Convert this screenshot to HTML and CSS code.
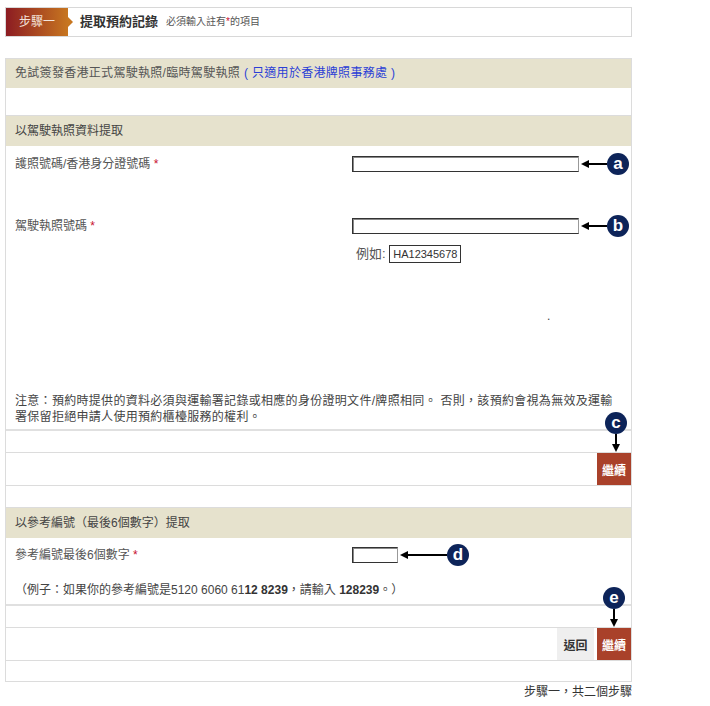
FILE: index.html
```
<!DOCTYPE html>
<html>
<head>
  <meta charset="utf-8">
  <link rel="stylesheet" href="styles.css">
</head>
<body>
<div class="head">
  <div class="step">步驟一</div>
  <h1>提取預約記錄</h1>
  <span class="req">必須輸入註有<span class="star">*</span>的項目</span>
</div>

<div class="panel">
  <div class="bar title">免試簽發香港正式駕駛執照/臨時駕駛執照<span class="blue">( 只適用於香港牌照事務處 )</span></div>
  <div class="gap"></div>

  <div class="section">
    <div class="bar">以駕駛執照資料提取</div>
    <div class="body body1">
      <div class="row">
        <label>護照號碼/香港身分證號碼 <span class="star">*</span></label>
        <div class="field">
          <input type="text" class="txt long">
          <svg class="harrow" width="26" height="10" viewBox="0 0 26 10"><polygon points="0,5 8,1 8,9" fill="#000"/><line x1="6" y1="5" x2="26" y2="5" stroke="#000" stroke-width="2"/></svg>
          <span class="badge">a</span>
        </div>
      </div>
      <div class="row row2">
        <label>駕駛執照號碼 <span class="star">*</span></label>
        <div class="field">
          <input type="text" class="txt long">
          <svg class="harrow" width="26" height="10" viewBox="0 0 26 10"><polygon points="0,5 8,1 8,9" fill="#000"/><line x1="6" y1="5" x2="26" y2="5" stroke="#000" stroke-width="2"/></svg>
          <span class="badge">b</span>
        </div>
      </div>
      <div class="eg">例如: <span class="egbox">HA12345678</span></div>
      <div class="dot">.</div>
      <p class="note">注意：預約時提供的資料必須與運輸署記錄或相應的身份證明文件/牌照相同。 否則，該預約會視為無效及運輸<br>署保留拒絕申請人使用預約櫃檯服務的權利。</p>
    </div>
  </div>

  <div class="gap"></div>
  <div class="actions">
    <div class="callout c1">
      <span class="badge">c</span>
      <svg width="10" height="18" viewBox="0 0 10 18"><line x1="5" y1="0" x2="5" y2="12" stroke="#000" stroke-width="2"/><polygon points="5,18 1,10 9,10" fill="#000"/></svg>
    </div>
    <button class="btn go">繼續</button>
  </div>
  <div class="gap"></div>

  <div class="section">
    <div class="bar">以參考編號（最後6個數字）提取</div>
    <div class="body body2">
      <div class="row">
        <label>參考編號最後6個數字 <span class="star">*</span></label>
        <div class="field">
          <input type="text" class="txt short">
          <svg class="harrow" width="47" height="10" viewBox="0 0 47 10"><polygon points="0,5 8,1 8,9" fill="#000"/><line x1="6" y1="5" x2="47" y2="5" stroke="#000" stroke-width="2"/></svg>
          <span class="badge">d</span>
        </div>
      </div>
      <p class="example">（例子：如果你的參考編號是5120 6060 61<b>12 8239</b>，請輸入 <b>128239</b>。）</p>
    </div>
  </div>

  <div class="gap"></div>
  <div class="actions">
    <div class="callout c2">
      <span class="badge">e</span>
      <svg width="10" height="18" viewBox="0 0 10 18"><line x1="5" y1="0" x2="5" y2="12" stroke="#000" stroke-width="2"/><polygon points="5,18 1,10 9,10" fill="#000"/></svg>
    </div>
    <button class="btn back">返回</button>
    <button class="btn go">繼續</button>
  </div>
  <div class="gap last"></div>
</div>

<div class="foot">步驟一，共二個步驟</div>
</body>
</html>
```

FILE: styles.css
```
html, body {
  margin: 0;
  background: #fff;
  color: #444;
  font-family: "Liberation Sans", "Noto Sans CJK TC", sans-serif;
  font-size: 12px;
  line-height: 16px;
}
.head {
  display: flex;
  align-items: center;
  margin: 7px 0 0 5px;
  width: 627px;
  height: 30px;
  box-sizing: border-box;
  border: 1px solid #d8d8d8;
}
.step {
  position: relative;
  width: 62px;
  height: 28px;
  line-height: 28px;
  text-align: center;
  color: #f3e4dc;
  font-size: 12px;
  background: linear-gradient(to right, #8c1c22, #c77620);
}
.step::after {
  content: "";
  position: absolute;
  right: -5px;
  top: 9px;
  border-left: 5px solid #c77620;
  border-top: 5px solid transparent;
  border-bottom: 5px solid transparent;
}
.head h1 {
  margin: 0 0 0 12px;
  font-size: 13px;
  font-weight: bold;
  color: #333;
}
.req {
  margin-left: 8px;
  font-size: 10px;
  color: #555;
}
.star {
  color: #c8102e;
}
.panel {
  margin: 21px 0 0 5px;
  width: 627px;
  box-sizing: border-box;
  border: 1px solid #dcdcdc;
}
.bar {
  height: 30px;
  line-height: 30px;
  padding-left: 9px;
  background: #e6e2cd;
  color: #444;
}
.title {
  height: 29px;
  line-height: 29px;
  letter-spacing: 0.3px;
  color: #555;
}
.blue {
  color: #2b3fd6;
  margin-left: 4px;
}
.gap {
  height: 21px;
}
.panel > .gap:nth-child(2) {
  height: 27px;
}
.panel > .gap.last {
  height: 20px;
}
.section {
  border-top: 1px solid #dcdcdc;
  border-bottom: 2px solid #e0e0e0;
}
.body {
  padding: 10px 0 4px 9px;
}
.body2 {
  padding-top: 9px;
  padding-bottom: 6px;
}
.row {
  display: flex;
  align-items: flex-start;
}
.row2 {
  margin-top: 46px;
}
.row label {
  flex-shrink: 0;
  width: 337px;
  color: #555;
}
.field {
  display: flex;
  align-items: center;
  height: 16px;
}
.txt {
  flex-shrink: 0;
  box-sizing: border-box;
  height: 16px;
  margin: 0;
  padding: 0;
  border: 1px solid #333;
  border-right-color: #999;
  box-shadow: inset 1px 1px 0 #888;
  background: #fff;
}
.long {
  width: 227px;
}
.short {
  width: 46px;
}
.harrow {
  flex-shrink: 0;
  margin-left: 2px;
}
.badge {
  display: inline-block;
  flex-shrink: 0;
  width: 22px;
  height: 22px;
  border-radius: 50%;
  background: #0d2459;
  color: #fff;
  font-family: "Liberation Sans", sans-serif;
  font-size: 17px;
  font-weight: bold;
  line-height: 21px;
  text-align: center;
}
.eg {
  margin: 11px 0 0 341px;
  height: 18px;
  line-height: 18px;
  font-size: 13px;
  color: #555;
}
.egbox {
  display: inline-block;
  height: 18px;
  box-sizing: border-box;
  padding: 0 3px;
  border: 1px solid #333;
  font-size: 11px;
  line-height: 16px;
  color: #333;
}
.dot {
  margin: 45px 0 0 532px;
  height: 16px;
}
.note {
  margin: 56px 0 0 0;
  padding-top: 13px;
  letter-spacing: 0.3px;
  color: #444;
}
.example {
  margin: 19px 0 0 0;
  color: #444;
}
.example b {
  color: #333;
}
.actions {
  position: relative;
  display: flex;
  justify-content: flex-end;
  gap: 3px;
  height: 32px;
  border-top: 1px solid #dcdcdc;
  border-bottom: 1px solid #dcdcdc;
}
.btn {
  height: 32px;
  padding: 0 4px;
  border: none;
  margin: 0;
  font-family: "Liberation Sans", "Noto Sans CJK TC", sans-serif;
  font-size: 12px;
  font-weight: bold;
  cursor: pointer;
}
.go {
  background: #a9412a;
  color: #fff;
  width: 34px;
}
.back {
  background: #efefef;
  color: #333;
  width: 37px;
}
.callout {
  position: absolute;
  top: -41px;
  display: flex;
  flex-direction: column;
  align-items: center;
}
.c1 {
  right: 4px;
}
.c2 {
  right: 6px;
}
.foot {
  width: 627px;
  margin: 2px 0 0 5px;
  text-align: right;
  color: #333;
}
```
